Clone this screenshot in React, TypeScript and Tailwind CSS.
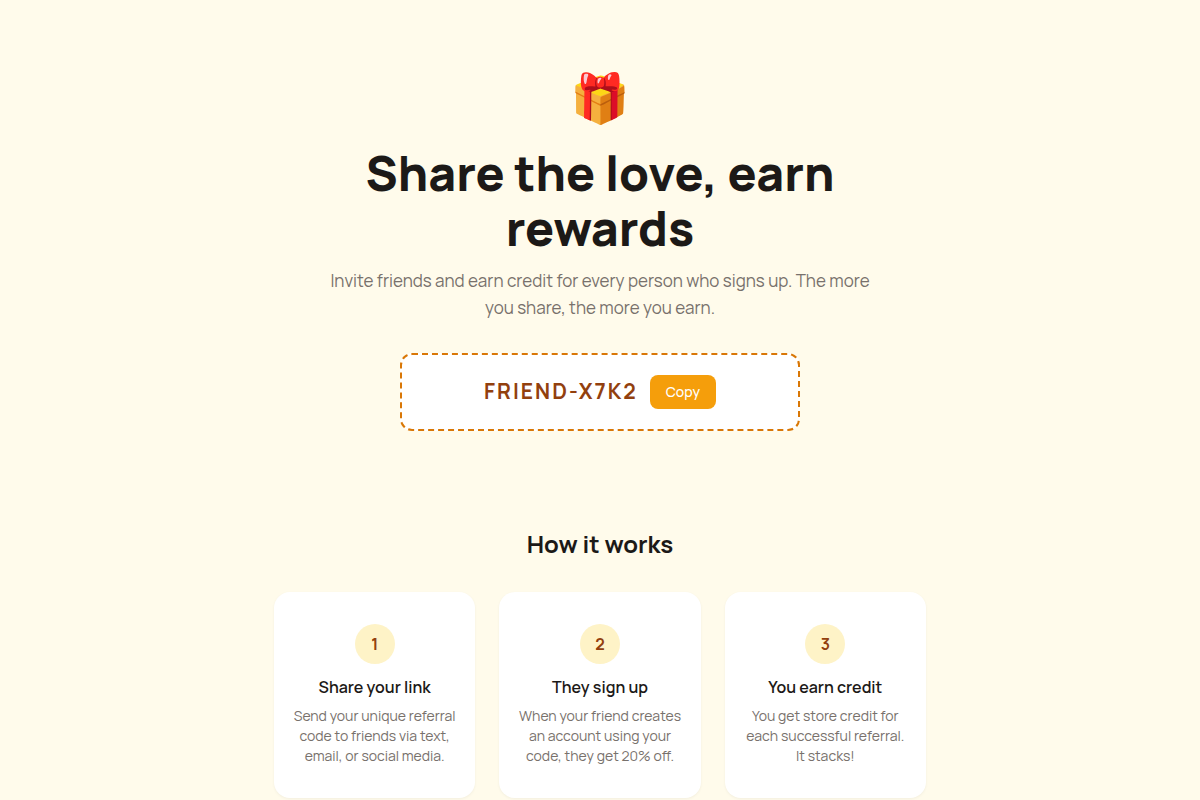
const steps = [
  { title: 'Share your link', text: 'Send your unique referral code to friends via text, email, or social media.' },
  { title: 'They sign up', text: 'When your friend creates an account using your code, they get 20% off.' },
  { title: 'You earn credit', text: 'You get store credit for each successful referral. It stacks!' },
];

export default function App() {
  return (
    <div className="min-h-screen bg-[#fffbeb] font-['Manrope','Inter',sans-serif] text-[#1c1917]">
      <header className="mx-auto flex max-w-[600px] flex-col items-center px-6 pt-16 pb-12 text-center">
        <div className="mb-4 text-5xl leading-[65px]">🎁</div>
        <h1 className="mb-3 text-5xl leading-[55px] font-extrabold">Share the love, earn rewards</h1>
        <p className="mb-8 text-[17px] leading-[27px] text-[#78716c]">
          Invite friends and earn credit for every person who signs up. The more you share, the more you earn.
        </p>
        <div className="flex w-full max-w-[400px] items-center justify-center gap-3 rounded-xl border-2 border-dashed border-[#d97706] bg-white p-5">
          <span className="text-[21px] font-bold tracking-[2px] text-[#92400e]">FRIEND-X7K2</span>
          <button type="button" className="rounded-lg bg-[#f59e0b] px-4 py-2 text-sm leading-[18px] font-medium text-white">Copy</button>
        </div>
      </header>
      <section className="mx-auto max-w-[700px] px-6 py-12">
        <h2 className="mb-8 text-center text-2xl leading-[33px] font-bold">How it works</h2>
        <div className="grid grid-cols-3 gap-6">
          {steps.map((step, i) => (
            <article key={step.title} className="rounded-2xl bg-white px-[18px] py-8 text-center shadow-[0_1px_3px_rgba(0,0,0,0.05)]">
              <div className="mx-auto mb-3 flex size-10 items-center justify-center rounded-full bg-[#fef3c7] font-bold text-[#92400e]">{i + 1}</div>
              <h3 className="mb-2 text-base leading-[22px] font-semibold">{step.title}</h3>
              <p className="text-sm leading-5 text-[#78716c]">{step.text}</p>
            </article>
          ))}
        </div>
      </section>
    </div>
  );
}
